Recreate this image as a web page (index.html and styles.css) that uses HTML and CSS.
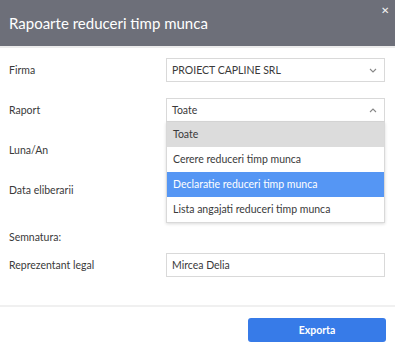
FILE: index.html
```html
<!DOCTYPE html>
<html lang="ro">
<head>
    <meta charset="UTF-8">
    <title>Rapoarte reduceri timp munca</title>
    <link rel="stylesheet" href="styles.css">
</head>
<body>
    <div class="modal">
        <div class="modal-header">
            <h1 class="modal-title">Rapoarte reduceri timp munca</h1>
            <span class="modal-close">&#x2715;</span>
        </div>

        <div class="modal-body">
            <div class="form-row">
                <label class="form-label">Firma</label>
                <div class="select">
                    <span>PROIECT CAPLINE SRL</span>
                    <svg class="chevron" width="8" height="5" viewBox="0 0 8 5"><path d="M1 1l3 3 3-3" fill="none" stroke="#888" stroke-width="1.1"/></svg>
                </div>
            </div>

            <div class="form-row">
                <label class="form-label">Raport</label>
                <div class="select-wrap">
                    <div class="select open">
                        <span>Toate</span>
                        <svg class="chevron" width="8" height="5" viewBox="0 0 8 5"><path d="M1 4l3-3 3 3" fill="none" stroke="#888" stroke-width="1.1"/></svg>
                    </div>
                    <ul class="dropdown">
                        <li class="selected">Toate</li>
                        <li>Cerere reduceri timp munca</li>
                        <li class="hover">Declaratie reduceri timp munca</li>
                        <li>Lista angajati reduceri timp munca</li>
                    </ul>
                </div>
            </div>

            <div class="form-row">
                <label class="form-label">Luna/An</label>
                <input class="text-input" value="">
            </div>

            <div class="form-row">
                <label class="form-label">Data eliberarii</label>
                <input class="text-input" value="">
            </div>

            <div class="form-row section">
                <label class="form-label">Semnatura:</label>
            </div>

            <div class="form-row tight">
                <label class="form-label">Reprezentant legal</label>
                <input class="text-input" value="Mircea Delia">
            </div>
        </div>

        <div class="modal-footer">
            <button class="btn-primary">Exporta</button>
        </div>
    </div>
</body>
</html>
```

FILE: styles.css
```css
body {
    margin: 0;
    font-family: Lato, "Open Sans", sans-serif;
    color: #3a3a3a;
    background-color: #fff;
}

.modal {
    width: 395px;
}

.modal-header {
    height: 46px;
    background-color: #6d6f79;
    border-bottom: 2px solid #ececec;
    display: flex;
    align-items: center;
    justify-content: space-between;
    padding: 0 9px;
    position: relative;
}

.modal-title {
    margin: 0;
    font-size: 15px;
    font-weight: normal;
    color: #fff;
}

.modal-close {
    position: absolute;
    right: 6px;
    top: 4px;
    color: #f4f4f4;
    font-size: 10px;
}

.modal-body {
    padding: 10px 10px 28px 9px;
    display: flex;
    flex-direction: column;
    gap: 16px;
}

.form-row {
    display: flex;
    align-items: center;
    height: 24px;
}

.form-row.section {
    margin-top: 7px;
}

.form-row.tight {
    margin-top: -12px;
}

.form-label {
    width: 157px;
    font-size: 10.5px;
}

.select,
.text-input {
    box-sizing: border-box;
    width: 219px;
    height: 24px;
    border: 1px solid #d9d9d9;
    font-family: inherit;
    font-size: 10.5px;
    color: #3a3a3a;
    padding: 0 5px;
    background-color: #fff;
    margin: 0;
    outline: none;
}

.select {
    display: flex;
    align-items: center;
    justify-content: space-between;
}

.chevron {
    margin-right: 2px;
}

.select-wrap {
    position: relative;
}

.dropdown {
    position: absolute;
    top: 24px;
    left: 0;
    width: 219px;
    box-sizing: border-box;
    margin: 0;
    padding: 0;
    list-style: none;
    background-color: #fff;
    border: 1px solid #d9d9d9;
    border-top: 0;
    box-shadow: 0 1px 3px rgba(0, 0, 0, 0.15);
    z-index: 2;
}

.dropdown li {
    height: 25px;
    line-height: 25px;
    padding: 0 6px;
    font-size: 10.5px;
}

.dropdown li.selected {
    background-color: #dcdcdc;
}

.dropdown li.hover {
    background-color: #5596f4;
    color: #fff;
}

.modal-footer {
    border-top: 2px solid #f0f0f0;
    padding: 11px 9px 9px;
    display: flex;
    justify-content: flex-end;
}

.btn-primary {
    width: 138px;
    height: 24px;
    border: 0;
    border-radius: 3px;
    background-color: #377be8;
    color: #fff;
    font-family: inherit;
    font-size: 10.5px;
    font-weight: bold;
}
```
